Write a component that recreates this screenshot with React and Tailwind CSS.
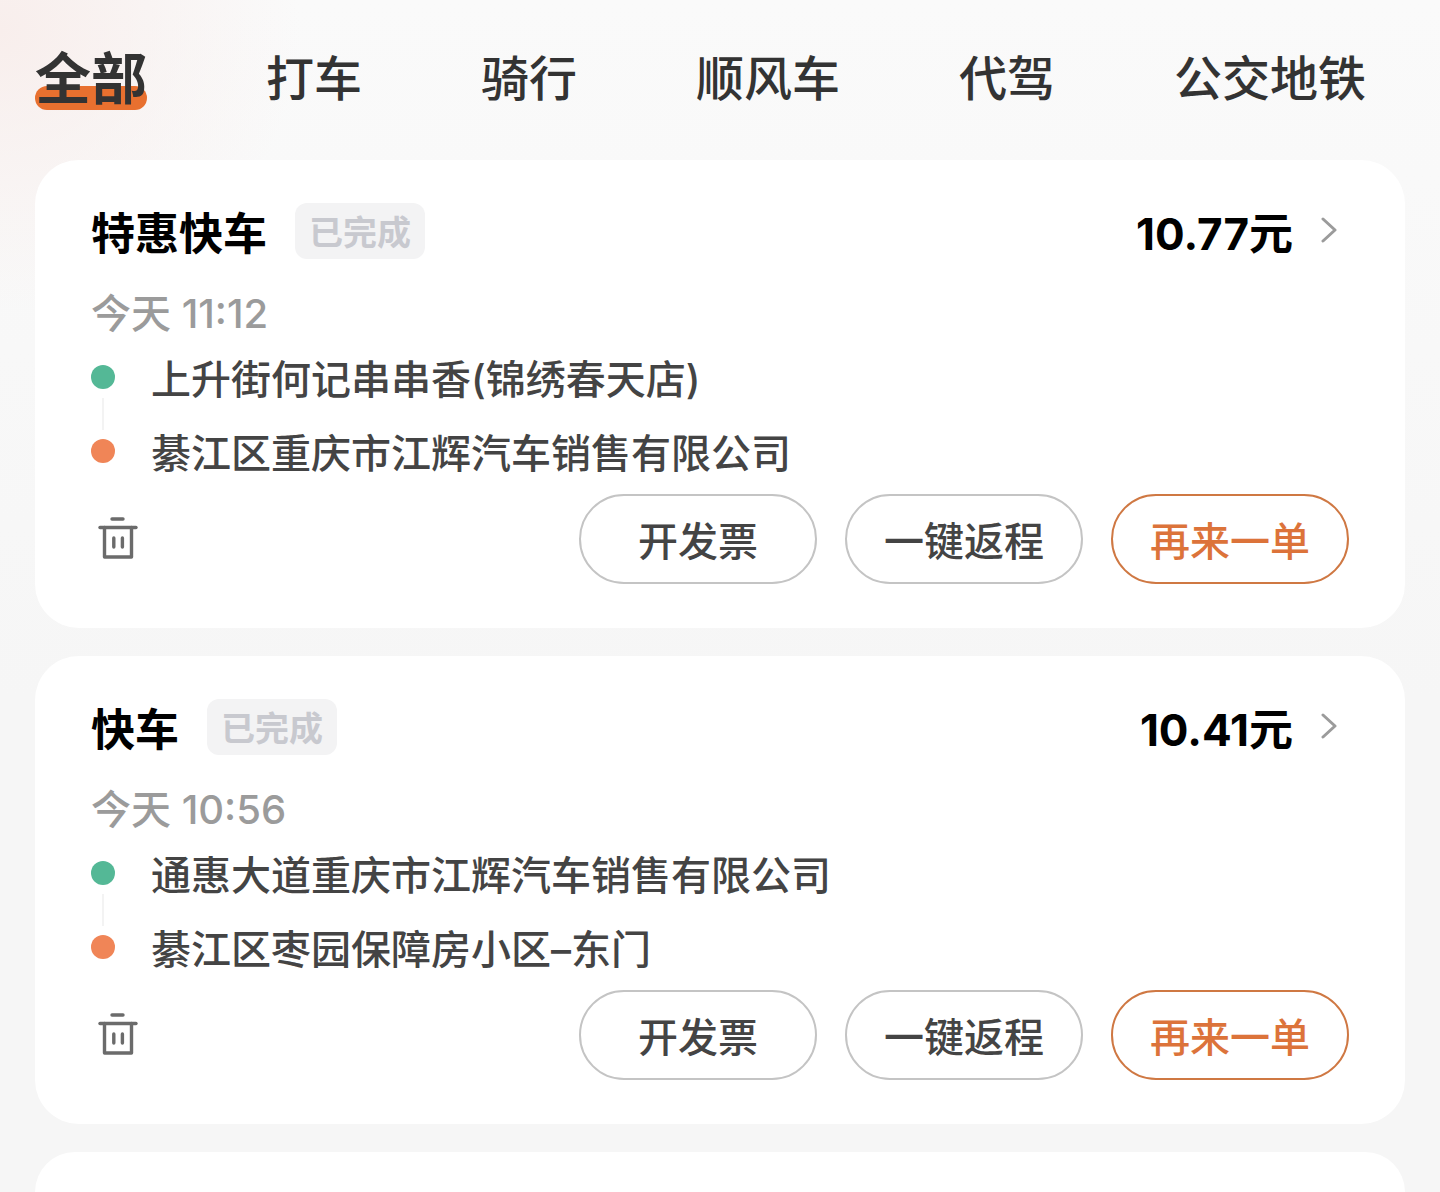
import { useState } from "react";

const TABS = ["全部", "打车", "骑行", "顺风车", "代驾", "公交地铁"];

const ORDERS = [
  {
    id: 1,
    type: "特惠快车",
    status: "已完成",
    price: "10.77元",
    time: "今天 11:12",
    from: "上升街何记串串香(锦绣春天店)",
    to: "綦江区重庆市江辉汽车销售有限公司",
  },
  {
    id: 2,
    type: "快车",
    status: "已完成",
    price: "10.41元",
    time: "今天 10:56",
    from: "通惠大道重庆市江辉汽车销售有限公司",
    to: "綦江区枣园保障房小区–东门",
  },
];

function TrashIcon() {
  return (
    <svg
      width="40"
      height="44"
      viewBox="0 0 40 44"
      fill="none"
      stroke="#6b6b6b"
      strokeWidth="3.4"
      strokeLinecap="round"
      strokeLinejoin="round"
    >
      <path d="M14 2h11" />
      <path d="M2 10.5h36" />
      <path d="M6.5 10.5v29.5h27v-29.5" />
      <path d="M15.8 21v9M24.4 21v9" />
    </svg>
  );
}

function ChevronIcon() {
  return (
    <svg
      width="16"
      height="28"
      viewBox="0 0 16 28"
      fill="none"
      stroke="#9b9b9b"
      strokeWidth="3"
      strokeLinecap="round"
      strokeLinejoin="round"
    >
      <path d="M2 2l12 11-12 11" />
    </svg>
  );
}

// Latin digits and punctuation in Inter, Chinese falls through to Noto
function Mixed({ children }) {
  return (
    <span className="font-['Inter','Noto_Sans_CJK_SC',sans-serif] leading-none">
      {children}
    </span>
  );
}

function Tabs({ active, setActive }) {
  return (
    <nav className="flex h-[160px] items-start justify-between pt-[38px] pr-[74px] pl-[35px]">
      {TABS.map((tab) => (
        <button
          key={tab}
          type="button"
          onClick={() => setActive(tab)}
          className={`relative h-[72px] whitespace-nowrap text-[#333333] ${
            active === tab
              ? "text-[56px] leading-[74px] font-bold"
              : "text-[48px] leading-[74px] font-medium"
          }`}
        >
          {active === tab && (
            <span className="absolute inset-x-0 bottom-0 h-6 rounded-full bg-[#e8702f]" />
          )}
          <span className="relative">{tab}</span>
        </button>
      ))}
    </nav>
  );
}

function OrderCard({ order }) {
  return (
    <article className="rounded-[44px] bg-white px-14 pt-[43px] pb-11">
      <div className="flex h-14 items-center">
        <h2 className="text-[44px] leading-[56px] font-bold text-black">
          {order.type}
        </h2>
        <span className="ml-7 rounded-xl bg-[#f3f3f4] px-[14px] text-[34px] leading-[56px] font-bold text-[#c8c9cf]">
          {order.status}
        </span>
        <a href="#detail" className="mr-3 ml-auto flex items-center gap-7">
          <span className="text-[44px] leading-[56px] font-bold text-black">
            <Mixed>{order.price}</Mixed>
          </span>
          <ChevronIcon />
        </a>
      </div>
      <p className="mt-6 text-[40px] leading-[57px] font-medium text-[#9b9b9b]">
        <Mixed>{order.time}</Mixed>
      </p>
      <div className="flex items-center gap-9">
        <div className="flex flex-col items-center gap-[9px]">
          <span className="size-6 rounded-full bg-[#54b896]" />
          <span className="h-8 w-[2px] bg-[#f3f3f3]" />
          <span className="size-6 rounded-full bg-[#f08557]" />
        </div>
        <div className="text-[40px] leading-[74px] font-medium text-[#444444]">
          <p>
            <Mixed>{order.from}</Mixed>
          </p>
          <p>
            <Mixed>{order.to}</Mixed>
          </p>
        </div>
      </div>
      <div className="mt-[6px] flex items-center gap-7">
        <button type="button" aria-label="删除" className="mr-auto ml-[7px]">
          <TrashIcon />
        </button>
        <button
          type="button"
          className="h-[90px] w-[238px] rounded-full border-2 border-[#c4c4c4] text-[40px] font-medium text-[#444444]"
        >
          开发票
        </button>
        <button
          type="button"
          className="h-[90px] w-[238px] rounded-full border-2 border-[#c4c4c4] text-[40px] font-medium text-[#444444]"
        >
          一键返程
        </button>
        <button
          type="button"
          className="h-[90px] w-[238px] rounded-full border-2 border-[#cf7843] text-[40px] font-medium text-[#dc733a]"
        >
          再来一单
        </button>
      </div>
    </article>
  );
}

export default function App() {
  const [active, setActive] = useState("全部");

  return (
    <div className="flex min-h-screen flex-col bg-[#f6f6f6] bg-[radial-gradient(ellipse_300px_280px_at_0px_30px,#f8eeec,transparent),linear-gradient(to_bottom,#fafafa,#f6f6f6_700px)] font-['Noto_Sans_CJK_SC',sans-serif]">
      <Tabs active={active} setActive={setActive} />
      <main className="flex flex-1 flex-col gap-7 px-[35px]">
        {ORDERS.map((order) => (
          <OrderCard key={order.id} order={order} />
        ))}
        <div className="flex-1 rounded-t-[44px] bg-white" />
      </main>
    </div>
  );
}
